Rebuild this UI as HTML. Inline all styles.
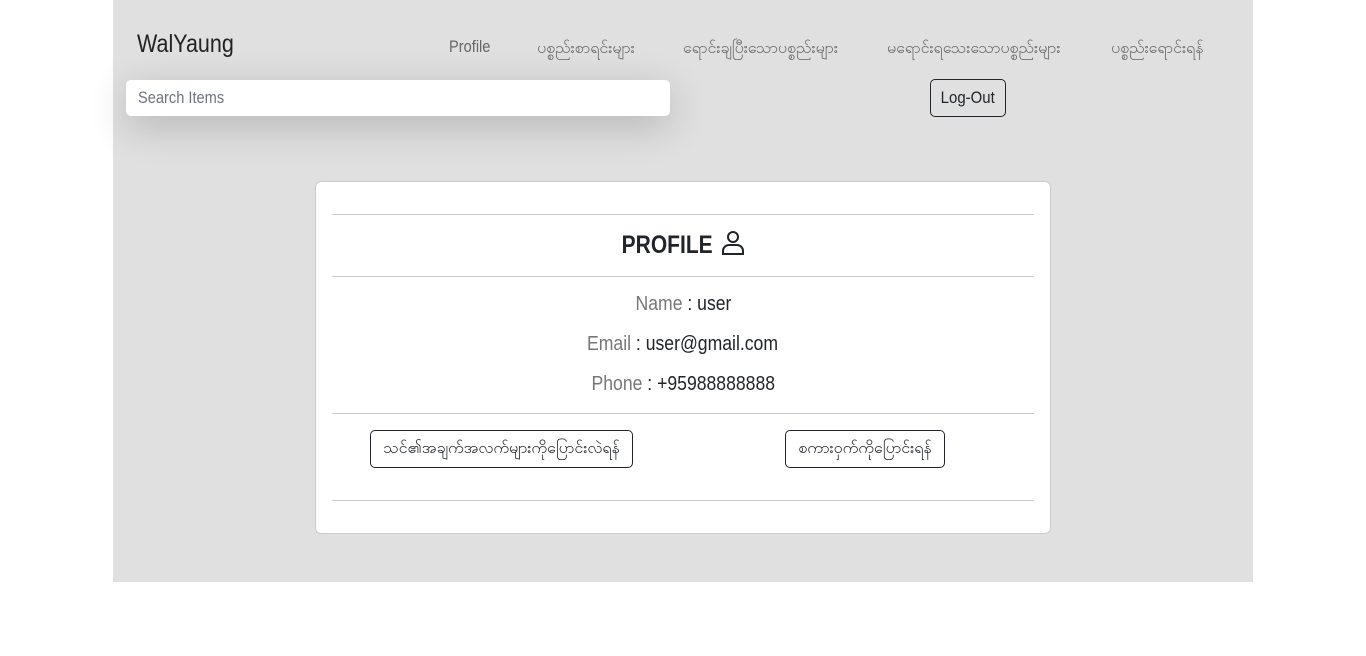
<!DOCTYPE html>
<html><head><meta charset="utf-8"><style>
*{margin:0;padding:0;box-sizing:border-box}
body{width:1366px;height:656px;background:#fff;position:relative;overflow:hidden;font-family:"Liberation Sans Narrow","Liberation Sans",sans-serif;color:#212529}
.bg{position:absolute;left:113px;top:0;width:1140px;height:582px;background:#e0e0e0}
.a{position:absolute;white-space:nowrap}
.nav{font-size:16px;color:#666;top:37px}
.sx{display:inline-block;transform:scaleX(.86);transform-origin:left center}
.sc{display:inline-block;transform:scaleX(.88);transform-origin:center}
.search{left:126px;top:80px;width:544px;height:36px;background:#fff;border-radius:5px;box-shadow:0 10px 40px rgba(0,0,0,.2);font-size:17px;color:#6c757d;padding:8px 12px}
.btn{border:1px solid #212529;border-radius:5px}
.card{left:315px;top:181px;width:736px;height:353px;background:#fff;border:1px solid #ccc;border-radius:6px}
.hr{position:absolute;left:332px;width:702px;height:0;border-top:1px solid #ccc;z-index:5}
.row{left:332px;width:702px;text-align:center;font-size:20px}
.row span{color:#777}
</style></head><body>
<div class="bg"></div>
<div class="a" style="left:137px;top:30px;font-size:25px;color:#222"><span class="sx">WalYaung</span></div>
<div class="a nav" style="left:449px;font-size:17px;top:37px"><span class="sx">Profile</span></div>
<div class="a nav" style="left:537px">ပစ္စည်းစာရင်းများ</div>
<div class="a nav" style="left:683px">ရောင်းချပြီးသောပစ္စည်းများ</div>
<div class="a nav" style="left:887px">မရောင်းရသေးသောပစ္စည်းများ</div>
<div class="a nav" style="left:1111px">ပစ္စည်းရောင်းရန်</div>
<div class="a search"><span class="sx">Search Items</span></div>
<div class="a btn" style="left:930px;top:79px;width:76px;height:38px;font-size:17px;text-align:center;line-height:36px"><span class="sc">Log-Out</span></div>
<div class="a card"></div>
<div class="a row" style="top:230px;font-size:25px;font-weight:bold;padding-right:8px"><span class="sc" style="color:#212529;transform:scaleX(.84)">PROFILE</span> <svg width="24" height="26" viewBox="0 0 24 26" style="vertical-align:-3px;margin-left:-8px"><circle cx="12" cy="7" r="5" fill="none" stroke="#212529" stroke-width="2"/><path d="M2 24v-3a6 6 0 0 1 6-6h8a6 6 0 0 1 6 6v3z" fill="none" stroke="#212529" stroke-width="2"/></svg></div>
<div class="a row" style="top:293px"><span class="sc" style="color:#212529"><span>Name</span> : user</span></div>
<div class="a row" style="top:333px"><span class="sc" style="color:#212529"><span>Email</span> : user@gmail.com</span></div>
<div class="a row" style="top:373px"><span class="sc" style="color:#212529"><span>Phone</span> : +95988888888</span></div>
<div class="hr" style="top:214px"></div>
<div class="hr" style="top:276px"></div>
<div class="hr" style="top:413px"></div>
<div class="hr" style="top:500px"></div>
<div class="a btn" style="left:370px;top:430px;width:263px;height:38px;font-size:16px;text-align:center;line-height:36px">သင်၏အချက်အလက်များကိုပြောင်းလဲရန်</div>
<div class="a btn" style="left:785px;top:430px;width:160px;height:38px;font-size:16px;text-align:center;line-height:36px">စကားဝှက်ကိုပြောင်းရန်</div>
</body></html>
